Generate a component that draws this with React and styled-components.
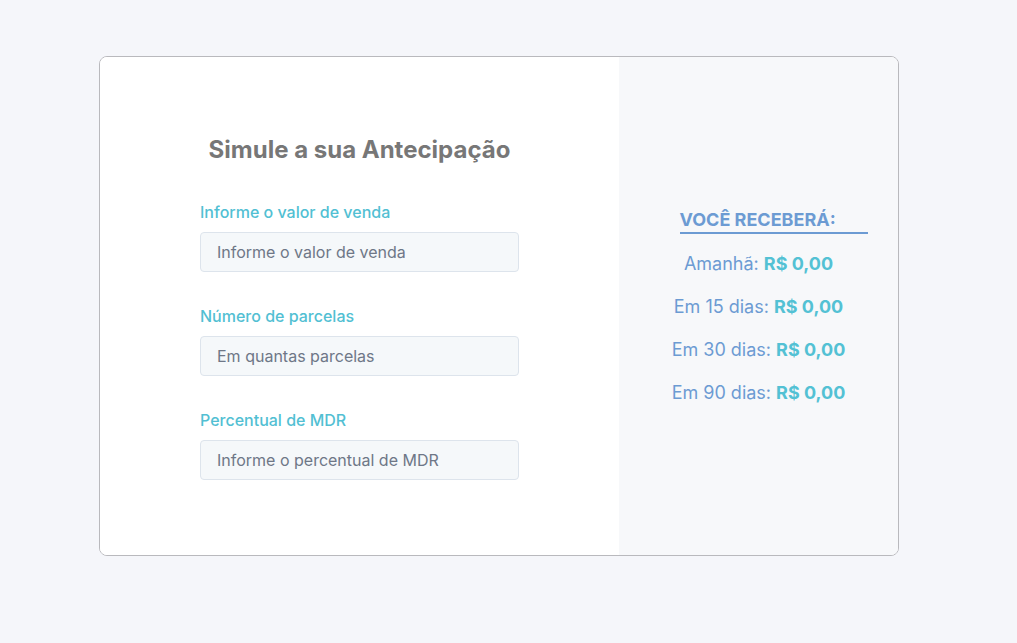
import React from "react";
import styled, { createGlobalStyle } from "styled-components";

const GlobalStyle = createGlobalStyle`
    body {
        margin: 0;
        background-color: #f5f6fa;
        font-family: Inter, "Noto Sans", sans-serif;
    }
    * {
        box-sizing: border-box;
    }
`

const fields = [
    { label: "Informe o valor de venda", placeholder: "Informe o valor de venda" },
    { label: "Número de parcelas", placeholder: "Em quantas parcelas" },
    { label: "Percentual de MDR", placeholder: "Informe o percentual de MDR" },
];

const results = [
    { label: "Amanhã:", value: "R$ 0,00" },
    { label: "Em 15 dias:", value: "R$ 0,00" },
    { label: "Em 30 dias:", value: "R$ 0,00" },
    { label: "Em 90 dias:", value: "R$ 0,00" },
];

export default function App() {
    return (
        <Page>
            <GlobalStyle />
            <Card>
                <FormPanel>
                    <Title>Simule a sua Antecipação</Title>
                    {fields.map((f) => (
                        <Field key={f.label}>
                            <Label>{f.label}</Label>
                            <Input type="text" placeholder={f.placeholder} />
                        </Field>
                    ))}
                </FormPanel>
                <ResultPanel>
                    <ResultTitle>VOCÊ RECEBERÁ:</ResultTitle>
                    {results.map((r) => (
                        <ResultRow key={r.label}>
                            {r.label} <strong>{r.value}</strong>
                        </ResultRow>
                    ))}
                </ResultPanel>
            </Card>
        </Page>
    );
}

const Page = styled.div`
    padding: 56px 0 0 99px;
`

const Card = styled.div`
    display: flex;
    width: 800px;
    height: 500px;
    border: 1px solid #b9b9bd;
    border-radius: 8px;
    overflow: hidden;
    background-color: #ffffff;
`

const FormPanel = styled.div`
    width: 519px;
    padding-top: 2px;
    display: flex;
    flex-direction: column;
    align-items: center;
    justify-content: center;
    background-color: #ffffff;
`

const Title = styled.h1`
    margin: 0 0 36px;
    font-size: 24px;
    line-height: 29px;
    font-weight: 700;
    color: #777777;
`

const Field = styled.div`
    display: flex;
    flex-direction: column;
    width: 319px;
    & + & {
        margin-top: 32px;
    }
`

const Label = styled.label`
    font-size: 16px;
    line-height: 24px;
    font-weight: 500;
    color: #52bfd3;
    margin-bottom: 8px;
`

const Input = styled.input`
    height: 40px;
    width: 100%;
    padding: 0 16px;
    font-family: Inter, "Noto Sans", sans-serif;
    font-size: 16px;
    color: #4a5568;
    background-color: #f5f8fa;
    border: 1px solid #dde4ec;
    border-radius: 4px;
    outline: none;

    &::placeholder {
        color: #6e7787;
    }
`

const ResultPanel = styled.div`
    flex: 1;
    padding-top: 8px;
    display: flex;
    flex-direction: column;
    align-items: center;
    justify-content: center;
    background-color: #f7f8fa;
`

const ResultTitle = styled.h2`
    width: 188px;
    margin: 0 0 8px 30px;
    padding-top: 2px;
    font-size: 18px;
    line-height: 24px;
    font-weight: 700;
    color: #6c9bd3;
    border-bottom: 2px solid #6c9bd3;
`

const ResultRow = styled.p`
    margin: 0;
    font-size: 18px;
    line-height: 43px;
    color: #6c9bd3;

    strong {
        font-weight: 700;
        color: #53c1d4;
    }
`
